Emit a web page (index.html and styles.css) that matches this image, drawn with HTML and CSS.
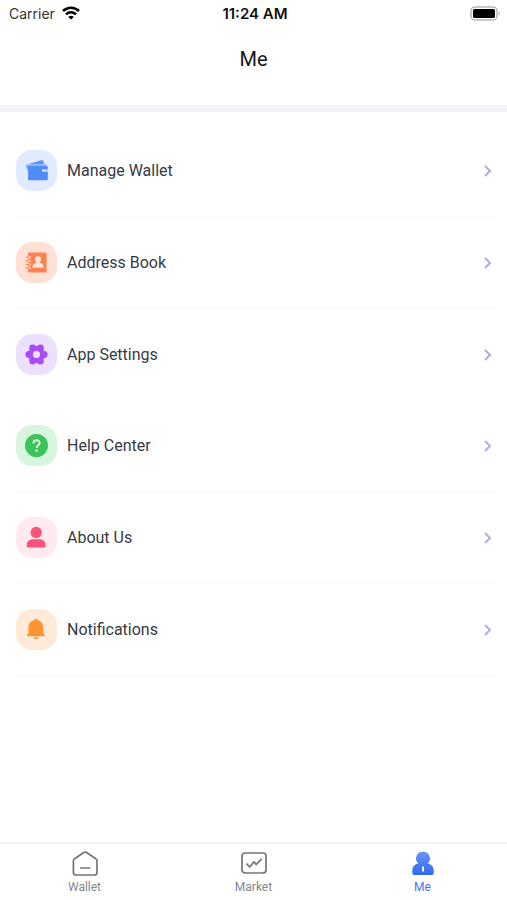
FILE: index.html
```html
<!DOCTYPE html>
<html lang="en">
<head>
    <meta charset="UTF-8">
    <meta name="viewport" content="width=device-width, initial-scale=1.0">
    <title>Me</title>
    <link rel="stylesheet" href="styles.css">
</head>
<body>
    <div class="status-bar">
        <div class="carrier">
            <span>Carrier</span>
            <svg width="18" height="14" viewBox="0 0 18 14" fill="none" stroke="#000" stroke-width="2.6">
                <path d="M1 5C5.600 .6 12.400 .6 17 5"/>
                <path d="M4 8.400c3-2.800 7-2.800 10 0"/>
                <path d="M9 13.600L6.200 10.900c1.600-1.500 4-1.500 5.600 0z" fill="#000" stroke="none"/>
            </svg>
        </div>
        <div class="time">11:24 AM</div>
        <div class="battery">
            <svg width="31" height="15" viewBox="0 0 31 15">
                <rect x="1" y="1" width="26" height="13" rx="4" fill="#fff" stroke="#b8b8b8" stroke-width="1.5"/>
                <rect x="3" y="3" width="22" height="9" rx="1.5" fill="#000"/>
                <path d="M28.500 5.300c2 .8 2 3.600 0 4.400z" fill="#b8b8b8"/>
            </svg>
        </div>
    </div>

    <header class="header">
        <h1>Me</h1>
    </header>

    <main class="content">
        <ul class="menu">
            <li>
                <a href="#wallets">
                    <span class="icon blue">
                        <svg width="23" height="23" viewBox="0 0 24 24">
                            <path d="M.6 6.500l3-1v7.300H2.900z" fill="#78a6fb"/>
                            <path d="M2.500 5.700L17.500 1c.7-.2 1.200 0 1.400.7l1.200 4.100H2.600z" fill="#5b93fa"/>
                            <path d="M3.200 5.600h18.300c.8 0 1.300.5 1.300 1.300v1H3.200z" fill="#8fb5fc"/>
                            <path d="M3.200 7.400h19.600c.6 0 1 .4 1 1v2.400h-4.600c-1 0-1.500.5-1.500 1.300s.5 1.300 1.500 1.300h4.600v7.600c0 .8-.5 1.300-1.300 1.300h-18c-.8 0-1.300-.5-1.300-1.300z" fill="#508cf8"/>
                            <path d="M18.500 10.800h5.300v2.600z" fill="#a9c6fd"/>
                        </svg>
                    </span>
                    <span class="label">Manage Wallet</span>
                    <svg class="arrow" width="8" height="14" viewBox="0 0 8 14"><path d="M1 2l5 5-5 5"/></svg>
                </a>
            </li>
            <li>
                <a href="#addresses">
                    <span class="icon orange">
                        <svg width="23" height="23" viewBox="0 0 24 24">
                            <path d="M4.500 1.500h16.700c.8 0 1.300.5 1.300 1.300v18.400c0 .8-.5 1.300-1.300 1.300H4.500c-.8 0-1.300-.5-1.300-1.300V2.800c0-.8.5-1.300 1.300-1.300z" fill="#ff8150"/>
                            <path d="M2 6.500h3M2 10.200h3M2 14h3M2 17.700h3" stroke="#ffe0d4" stroke-width="2.400" stroke-linecap="round"/>
                            <path d="M1.500 6.500h2.700M1.500 10.200h2.700M1.500 14h2.700M1.500 17.700h2.700" stroke="#ff8150" stroke-width="1.300" stroke-linecap="round"/>
                            <circle cx="13.600" cy="8.600" r="3.200" fill="#ffe5da"/>
                            <path d="M12.200 10h2.800l.4 2.200c2.600.6 4 2 4 4.300v1H7.800v-1c0-2.300 1.400-3.700 4-4.300z" fill="#ffe5da"/>
                        </svg>
                    </span>
                    <span class="label">Address Book</span>
                    <svg class="arrow" width="8" height="14" viewBox="0 0 8 14"><path d="M1 2l5 5-5 5"/></svg>
                </a>
            </li>
            <li class="last">
                <a href="#settings">
                    <span class="icon purple">
                        <svg width="23" height="23" viewBox="0 0 24 24" fill="#aa4cf5">
                            <circle cx="12" cy="12" r="8.900"/>
                            <circle cx="20" cy="12" r="3.600"/>
                            <circle cx="16" cy="18.900" r="3.600"/>
                            <circle cx="8" cy="18.900" r="3.600"/>
                            <circle cx="4" cy="12" r="3.600"/>
                            <circle cx="8" cy="5.100" r="3.600"/>
                            <circle cx="16" cy="5.100" r="3.600"/>
                            <circle cx="12" cy="12" r="3.700" fill="#f0e2fe"/>
                        </svg>
                    </span>
                    <span class="label">App Settings</span>
                    <svg class="arrow" width="8" height="14" viewBox="0 0 8 14"><path d="M1 2l5 5-5 5"/></svg>
                </a>
            </li>
        </ul>
        <ul class="menu">
            <li>
                <a href="#help">
                    <span class="icon green">
                        <svg width="23" height="23" viewBox="0 0 24 24">
                            <circle cx="12" cy="12" r="12" fill="#3cc35b"/>
                            <path d="M8.800 9.800c0-4.200 6.600-4.200 6.600-.4 0 2.500-3.300 2.400-3.300 5.300" fill="none" stroke="#dff8e3" stroke-width="2"/>
                            <circle cx="12.100" cy="17.300" r="1.300" fill="#dff8e3"/>
                        </svg>
                    </span>
                    <span class="label">Help Center</span>
                    <svg class="arrow" width="8" height="14" viewBox="0 0 8 14"><path d="M1 2l5 5-5 5"/></svg>
                </a>
            </li>
            <li>
                <a href="#about">
                    <span class="icon pink">
                        <svg width="23" height="23" viewBox="0 0 24 24" fill="#fc537b">
                            <circle cx="11.700" cy="6.700" r="5.900"/>
                            <path d="M8.200 13.800h7c3.900 0 6.300 2.600 6.300 6v1.200c0 .9-.5 1.500-1.500 1.500H3.400c-1 0-1.500-.6-1.500-1.500v-1.200c0-3.400 2.400-6 6.300-6z"/>
                        </svg>
                    </span>
                    <span class="label">About Us</span>
                    <svg class="arrow" width="8" height="14" viewBox="0 0 8 14"><path d="M1 2l5 5-5 5"/></svg>
                </a>
            </li>
            <li>
                <a href="#notifications">
                    <span class="icon amber">
                        <svg width="23" height="23" viewBox="0 0 24 24" fill="#fe9330">
                            <path d="M10.200 2.200V.8h2.200v1.400c4 .7 6.600 3.600 6.600 7.700v6l1.600 1.800v1.300H2v-1.300l1.600-1.800v-6c0-4.100 2.600-7 6.600-7.700z"/>
                            <path d="M8.800 20.200h5c-.4 2.600-4.600 2.600-5 0z"/>
                        </svg>
                    </span>
                    <span class="label">Notifications</span>
                    <svg class="arrow" width="8" height="14" viewBox="0 0 8 14"><path d="M1 2l5 5-5 5"/></svg>
                </a>
            </li>
        </ul>
    </main>

    <nav class="tabs">
        <a href="#wallet">
            <svg width="28" height="28" viewBox="0 0 28 28" fill="none" stroke="#73757d" stroke-width="1.700" stroke-linejoin="round" stroke-linecap="round">
                <path d="M12.800 2.500L3.600 8.800C2.800 9.300 2.400 10.100 2.400 11V22.500c0 1.500 1 2.500 2.500 2.500h18.600c1.500 0 2.500-1 2.500-2.500V11c0-.9-.4-1.700-1.200-2.200l-9.200-6.300c-.9-.6-1.900-.6-2.800 0z"/>
                <path d="M9.700 18h9"/>
            </svg>
            <span>Wallet</span>
        </a>
        <a href="#market">
            <svg width="28" height="28" viewBox="0 0 28 28" fill="none" stroke="#73757d" stroke-width="1.700" stroke-linejoin="round" stroke-linecap="round">
                <rect x="2" y="3" width="24" height="20" rx="3"/>
                <path d="M7 14.200l2.700 2.800 4.300-5.200 2.200 2.700 5-5.200"/>
            </svg>
            <span>Market</span>
        </a>
        <a href="#me" class="active">
            <svg width="28" height="28" viewBox="0 0 28 28">
                <defs>
                    <linearGradient id="me-fill" x1="0" y1="0" x2="0" y2="1">
                        <stop offset="0" stop-color="#6795f7"/>
                        <stop offset="1" stop-color="#316af2"/>
                    </linearGradient>
                </defs>
                <path d="M14 1.800a6.700 6.700 0 0 1 4.700 11.700c3.500.5 6 3.300 6 7v2.500c0 1.200-.8 2-2 2H5.300c-1.200 0-2-.8-2-2v-2.500c0-3.700 2.500-6.500 6-7A6.700 6.700 0 0 1 14 1.800z" fill="url(#me-fill)"/>
                <rect x="13" y="16.500" width="2" height="5" rx=".5" fill="#fff"/>
            </svg>
            <span>Me</span>
        </a>
    </nav>
</body>
</html>
```
FILE: styles.css
```css
* {
    box-sizing: border-box;
}
body {
    display: flex;
    flex-direction: column;
    min-height: 100vh;
    margin: 0;
    background-color: #fff;
    color: #363b44;
    font-family: Roboto, sans-serif;
}
a {
    color: inherit;
    text-decoration: none;
}
svg {
    display: block;
    flex-shrink: 0;
}
.status-bar {
    display: grid;
    grid-template-columns: 1fr auto 1fr;
    align-items: center;
    height: 26px;
    padding: 0 6px 0 9px;
    color: #111;
    font-family: Inter, sans-serif;
    font-size: 14px;
}
.carrier {
    display: flex;
    align-items: center;
    gap: 7px;
    color: #333;
}
.time {
    font-size: 15px;
    font-weight: 600;
}
.battery {
    display: flex;
    justify-content: flex-end;
}
.header {
    padding: 18px 0 30px;
    border-bottom: 7px solid #f3f4f7;
    text-align: center;
}
h1 {
    margin: 0;
    color: #151515;
    font-size: 20px;
    font-weight: 400;
    line-height: 31px;
}
.content {
    flex: 1;
    padding: 13px 11px 20px 16px;
}
.menu {
    list-style: none;
    margin: 0;
    padding: 0;
}
.menu li {
    border-bottom: 1px solid #f8f8f9;
}
.menu .last {
    border-bottom: none;
}
.menu a {
    display: flex;
    align-items: center;
    gap: 10px;
    height: 91px;
    padding-right: 4px;
    font-size: 16px;
}
.label {
    flex: 1;
}
.icon {
    display: flex;
    align-items: center;
    justify-content: center;
    width: 41px;
    height: 41px;
    border-radius: 16px;
}
.blue {
    background-color: #e1eafe;
}
.orange {
    background-color: #ffe0d4;
}
.purple {
    background-color: #eddffe;
}
.green {
    background-color: #d8f5dd;
}
.pink {
    background-color: #ffeaef;
}
.amber {
    background-color: #ffead9;
}
.arrow {
    fill: none;
    stroke: #adb0d2;
    stroke-width: 2;
}
.tabs {
    display: flex;
    height: 58px;
    padding-top: 6px;
    border-top: 2px solid #f2f2f4;
}
.tabs a {
    display: flex;
    flex: 1;
    flex-direction: column;
    align-items: center;
    gap: 2px;
    color: #85878d;
    font-size: 12px;
    line-height: 14px;
}
.tabs .active {
    color: #3f75f3;
}
```
